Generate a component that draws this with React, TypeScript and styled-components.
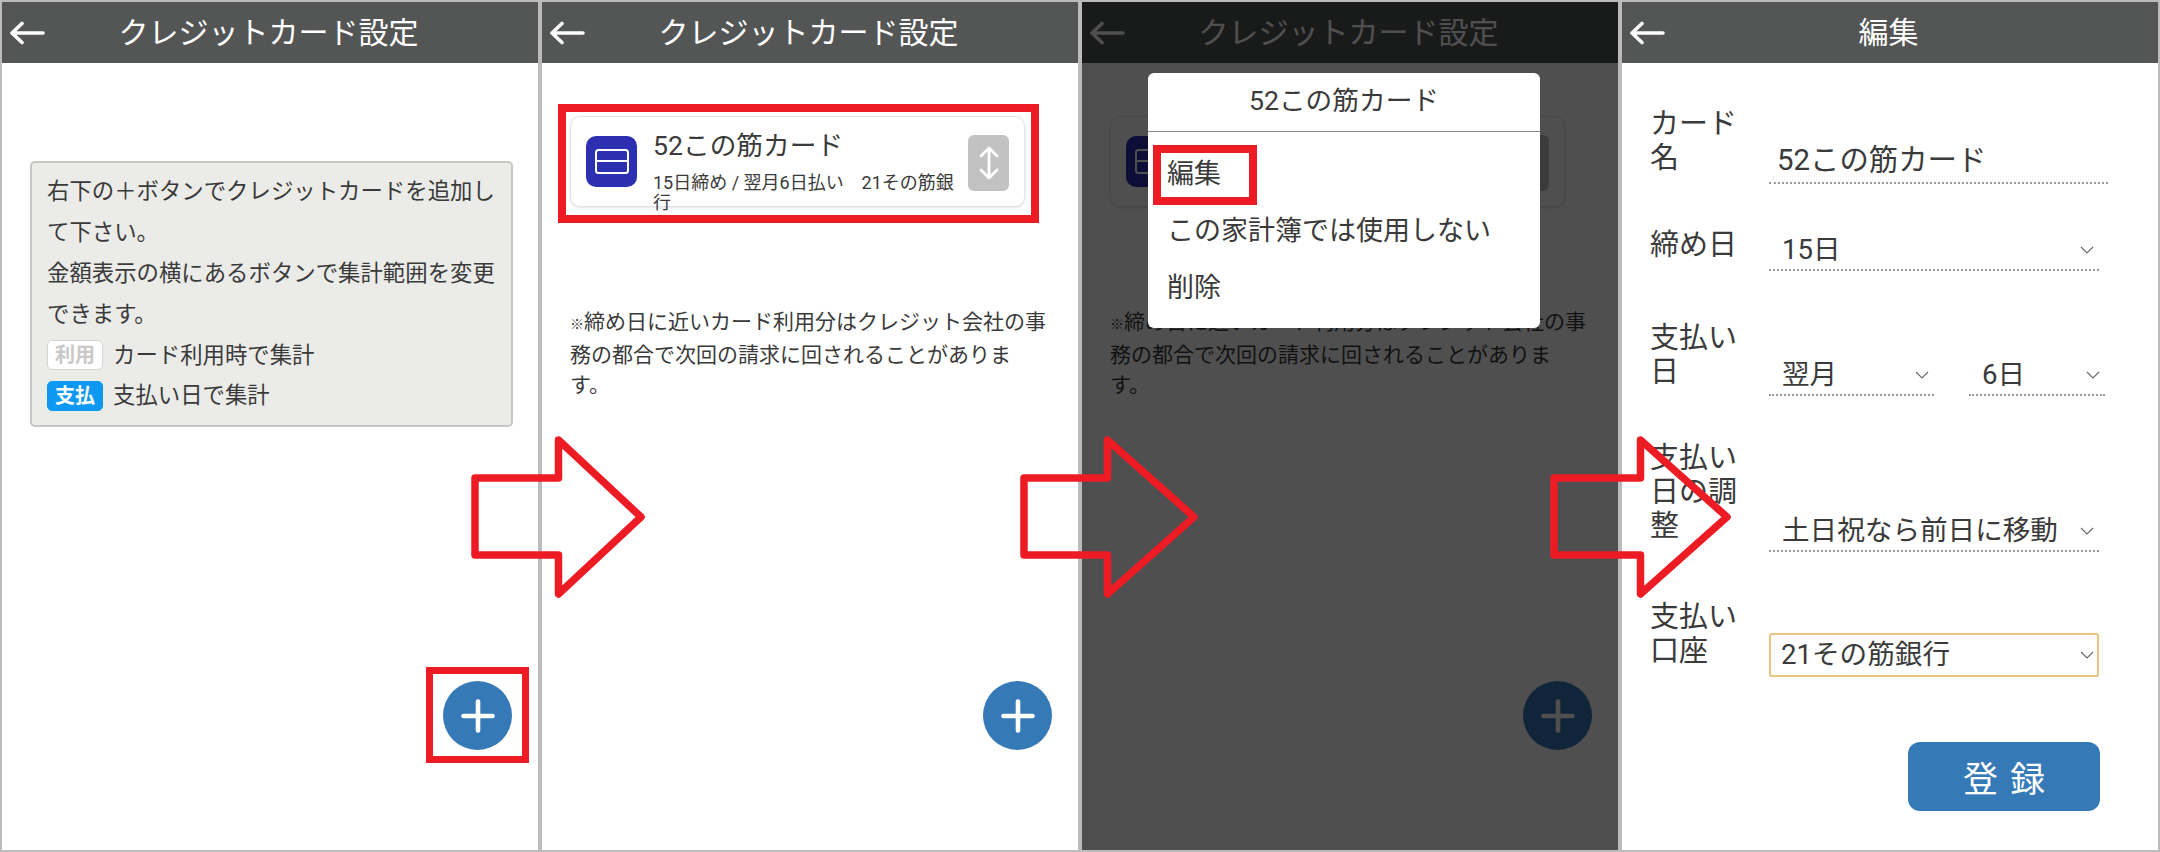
import React from 'react'
import styled, { createGlobalStyle } from 'styled-components'

const GlobalStyle = createGlobalStyle`
  html, body { margin: 0; padding: 0; background: #bbbbbb; }
  body { font-family: Roboto, "Noto Sans CJK JP", sans-serif; color: #3a3a3a; }
  * { box-sizing: border-box; }
`

const Gallery = styled.div`
  position: relative;
  display: flex;
  gap: 4px;
  width: 2160px;
  height: 852px;
  padding: 2px;
  background: #bbbbbb;
  overflow: hidden;
`

const Phone = styled.section`
  position: relative;
  display: flex;
  flex-direction: column;
  width: 536px;
  height: 848px;
  background: #fff;
`

const Header = styled.header`
  display: grid;
  grid-template-columns: 53px 1fr 63px;
  align-items: center;
  flex: none;
  height: 61px;
  padding-left: 7px;
  background: #535655;
  color: #fff;
`

const Title = styled.h1`
  margin: 0;
  font-size: 30px;
  font-weight: 400;
  line-height: 1;
  text-align: center;
`

const Highlight = styled.span<{ $inset: string; $width: number }>`
  position: absolute;
  inset: ${p => p.$inset};
  border: ${p => p.$width}px solid #ed1c24;
  pointer-events: none;
`

const Fab = styled.div`
  position: absolute;
  right: 26px;
  bottom: 100px;
  display: flex;
  align-items: center;
  justify-content: center;
  width: 69px;
  height: 69px;
  border-radius: 50%;
  background: #3579b7;
`

const InfoBody = styled.div`
  padding: 98px 25px 0 28px;
`

const InfoBox = styled.div`
  height: 266px;
  padding: 8px 15px 0;
  border: 2px solid #c6c6c2;
  border-radius: 5px;
  background: #ebebe8;
  font-size: 22.4px;
  line-height: 41px;
  white-space: nowrap;
`

const LegendRow = styled.div`
  display: flex;
  align-items: center;
  gap: 10px;
  height: 40.5px;
`

const Badge = styled.span<{ $on?: boolean }>`
  display: flex;
  align-items: center;
  justify-content: center;
  width: 56px;
  height: 30px;
  border: 1px solid ${p => (p.$on ? '#0d99f2' : '#d4d4d4')};
  border-radius: 5px;
  background: ${p => (p.$on ? '#0d99f2' : '#fff')};
  color: ${p => (p.$on ? '#fff' : '#c8c8c8')};
  font-size: 20px;
  font-weight: 700;
  line-height: 1;
`

const ListBody = styled.div`
  padding: 53px 0 0 28px;
`

const Card = styled.div`
  position: relative;
  display: flex;
  align-items: flex-start;
  width: 455px;
  height: 91px;
  padding: 18px 15px 0 15px;
  border: 1px solid #e4e4e4;
  border-radius: 10px;
  background: #fff;
  box-shadow: 0 1px 3px rgba(0, 0, 0, 0.12);
`

const CardIcon = styled.div`
  display: flex;
  flex: none;
  align-items: center;
  justify-content: center;
  width: 51px;
  height: 51px;
  margin: 1px 16px 0 0;
  border-radius: 10px;
  background: #2b2fb0;
`

const CardText = styled.div`
  flex: 1;
  min-width: 0;
  margin-top: -7px;
`

const CardName = styled.div`
  height: 45px;
  font-size: 26.7px;
  line-height: 36px;
`

const CardSub = styled.div`
  font-size: 18px;
  line-height: 19.5px;
`

const SortButton = styled.div`
  display: flex;
  flex: none;
  align-items: center;
  justify-content: center;
  width: 41px;
  height: 56px;
  border-radius: 6px;
  background: #c2c2c2;
`

const Notice = styled.p`
  margin: 100px 0 0;
  font-size: 21px;
  line-height: 30.5px;
  white-space: nowrap;
`

const Mark = styled.span`
  font-size: 14px;
`

const Dim = styled.div`
  position: absolute;
  inset: 0;
  padding: 71px 0 0 66px;
  background: rgba(0, 0, 0, 0.69);
`

const Dialog = styled.div`
  width: 392px;
  height: 255px;
  border-radius: 6px;
  background: #fff;
  font-size: 26.7px;
`

const DialogTitle = styled.div`
  height: 59px;
  margin-bottom: 14px;
  border-bottom: 1.5px solid #888;
  line-height: 56px;
  text-align: center;
`

const DialogItem = styled.div`
  position: relative;
  width: max-content;
  height: 57px;
  margin-left: 19px;
  font-size: 27px;
  line-height: 57px;
`

const FormBody = styled.div`
  display: flex;
  flex-direction: column;
  padding-left: 28px;
`

const FormRow = styled.div<{ $h: number }>`
  display: grid;
  grid-template-columns: 119px 1fr;
  align-items: end;
  height: ${p => p.$h}px;
`

const Label = styled.div<{ $mb?: number }>`
  width: 90px;
  margin-bottom: ${p => p.$mb ?? 9}px;
  font-size: 29px;
  line-height: 34px;
`

const Fields = styled.div`
  display: flex;
  gap: 35px;
`

const Field = styled.div<{ $w: number; $pad?: number; $top?: number; $size?: number; $focus?: boolean }>`
  display: flex;
  align-items: center;
  justify-content: space-between;
  width: ${p => p.$w}px;
  height: 44px;
  padding: ${p => p.$top ?? 3}px 5px 0 ${p => p.$pad ?? 13}px;
  border-bottom: 2px dotted #9a9a9a;
  font-size: ${p => p.$size ?? 27.6}px;
  line-height: 1;
  white-space: nowrap;
  ${p => p.$focus && 'outline: 2px solid #e8c67e; outline-offset: -2px; border-radius: 3px;'}
`

const Footer = styled.div`
  display: flex;
  justify-content: flex-end;
  padding: 65px 58px 0 0;
`

const SubmitButton = styled.button`
  width: 192px;
  height: 69px;
  padding: 0;
  border: 0;
  border-radius: 12px;
  background: #3579b7;
  color: #fff;
  font-family: inherit;
  font-size: 35px;
  letter-spacing: 12px;
  text-indent: 12px;
`

const ArrowSvg = styled.svg<{ $left: number }>`
  position: absolute;
  top: 436px;
  left: ${p => p.$left}px;
  overflow: visible;
`

const BackIcon = () => (
  <svg width="36" height="24" viewBox="0 0 36 24" fill="none" stroke="#fff" strokeWidth="3.6" strokeLinecap="round" strokeLinejoin="round">
    <path d="M3 12H34M13 2.5 3 12l10 9.5" />
  </svg>
)

const PlusIcon = () => (
  <svg width="34" height="34" viewBox="0 0 34 34" stroke="#fff" strokeWidth="4.6" strokeLinecap="round">
    <path d="M17 2.5v29M2.5 17h29" />
  </svg>
)

const CardGlyph = () => (
  <svg width="34" height="25" viewBox="0 0 34 25" fill="none" stroke="#fff" strokeWidth="2">
    <rect x="1" y="1" width="32" height="23" rx="2.5" />
    <path d="M1 12h32" />
  </svg>
)

const SortGlyph = () => (
  <svg width="20" height="34" viewBox="0 0 20 34" fill="none" stroke="#fff" strokeWidth="2.8" strokeLinecap="round" strokeLinejoin="round">
    <path d="M10 2v30M2 10l8-8 8 8M2 24l8 8 8-8" />
  </svg>
)

const Chevron = () => (
  <svg width="14" height="8" viewBox="0 0 14 8" fill="none" stroke="#666" strokeWidth="1.1">
    <path d="M1 1l6 6 6-6" />
  </svg>
)

const BigArrow = ({ left, width, base }: { left: number; width: number; base: number }) => (
  <ArrowSvg $left={left} width={width} height="162" viewBox={`0 0 ${width} 162`} fill="none" stroke="#ed1c24" strokeWidth="7.5" strokeLinejoin="round">
    <path d={`M4 42H${base}V4L${width - 4} 81 ${base} 158V119H4Z`} />
  </ArrowSvg>
)

const CardScreen = ({ marked, children }: { marked?: boolean; children?: React.ReactNode }) => (
  <Phone>
    <Header>
      <BackIcon />
      <Title>クレジットカード設定</Title>
    </Header>
    <ListBody>
      <Card>
        <CardIcon><CardGlyph /></CardIcon>
        <CardText>
          <CardName>52この筋カード</CardName>
          <CardSub>15日締め / 翌月6日払い&nbsp;&nbsp;&nbsp;&nbsp;21その筋銀行</CardSub>
        </CardText>
        <SortButton><SortGlyph /></SortButton>
        {marked && <Highlight $inset="-13px -15px -17px -13px" $width={8} />}
      </Card>
      <Notice>
        <Mark>※</Mark>締め日に近いカード利用分はクレジット会社の事<br />
        務の都合で次回の請求に回されることがありま<br />
        す。
      </Notice>
    </ListBody>
    <Fab><PlusIcon /></Fab>
    {children}
  </Phone>
)

const App = () => {
  return (
    <Gallery>
      <GlobalStyle />
      <Phone>
        <Header>
          <BackIcon />
          <Title>クレジットカード設定</Title>
        </Header>
        <InfoBody>
          <InfoBox>
            右下の＋ボタンでクレジットカードを追加し<br />
            て下さい。<br />
            金額表示の横にあるボタンで集計範囲を変更<br />
            できます。
            <LegendRow><Badge>利用</Badge>カード利用時で集計</LegendRow>
            <LegendRow><Badge $on>支払</Badge>支払い日で集計</LegendRow>
          </InfoBox>
        </InfoBody>
        <Fab>
          <PlusIcon />
          <Highlight $inset="-14px -17px -13px -17px" $width={7} />
        </Fab>
      </Phone>

      <CardScreen marked />

      <CardScreen>
        <Dim>
          <Dialog>
            <DialogTitle>52この筋カード</DialogTitle>
            <DialogItem>
              編集
              <Highlight $inset="-1px -36px -2px -14px" $width={8} />
            </DialogItem>
            <DialogItem>この家計簿では使用しない</DialogItem>
            <DialogItem>削除</DialogItem>
          </Dialog>
        </Dim>
      </CardScreen>

      <Phone>
        <Header>
          <BackIcon />
          <Title>編集</Title>
        </Header>
        <FormBody>
          <FormRow $h={121}>
            <Label>カード名</Label>
            <Fields><Field $w={339} $pad={8} $top={0} $size={29.4}>52この筋カード</Field></Fields>
          </FormRow>
          <FormRow $h={87}>
            <Label>締め日</Label>
            <Fields><Field $w={330}>15日<Chevron /></Field></Fields>
          </FormRow>
          <FormRow $h={125}>
            <Label $mb={7}>支払い日</Label>
            <Fields>
              <Field $w={165}>翌月<Chevron /></Field>
              <Field $w={136}>6日<Chevron /></Field>
            </Fields>
          </FormRow>
          <FormRow $h={156}>
            <Label>支払い日の調整</Label>
            <Fields><Field $w={330}>土日祝なら前日に移動<Chevron /></Field></Fields>
          </FormRow>
          <FormRow $h={125}>
            <Label>支払い口座</Label>
            <Fields><Field $w={330} $pad={12} $top={2} $focus>21その筋銀行<Chevron /></Field></Fields>
          </FormRow>
          <Footer>
            <SubmitButton>登録</SubmitButton>
          </Footer>
        </FormBody>
      </Phone>

      <BigArrow left={471} width={174} base={87.5} />
      <BigArrow left={1020} width={178} base={87.5} />
      <BigArrow left={1550} width={181} base={90.5} />
    </Gallery>
  )
}

export default App
